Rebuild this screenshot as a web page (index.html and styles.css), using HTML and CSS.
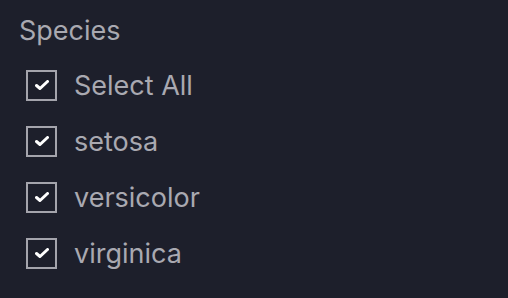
FILE: index.html
```
<!DOCTYPE html>
<html lang="en">
<head>
  <meta charset="UTF-8" />
  <meta name="viewport" content="width=device-width, initial-scale=1.0" />
  <title>Species</title>
  <link rel="stylesheet" href="styles.css">
</head>
<body>
  <div id="panel">
    <div class="title">Species</div>
    <div class="options">
      <label class="option"><span class="box"><svg viewBox="0 0 14 10"><path d="M1.5 5.5 L5 8.5 L12.5 1.5" /></svg></span>Select All</label>
      <label class="option"><span class="box"><svg viewBox="0 0 14 10"><path d="M1.5 5.5 L5 8.5 L12.5 1.5" /></svg></span>setosa</label>
      <label class="option"><span class="box"><svg viewBox="0 0 14 10"><path d="M1.5 5.5 L5 8.5 L12.5 1.5" /></svg></span>versicolor</label>
      <label class="option"><span class="box"><svg viewBox="0 0 14 10"><path d="M1.5 5.5 L5 8.5 L12.5 1.5" /></svg></span>virginica</label>
    </div>
  </div>
</body>
</html>
```

FILE: styles.css
```
body {
  margin: 0;
  background-color: #1d1f2b;
  font-family: Inter, "Noto Sans", sans-serif;
  color: #a9a9b1;
  height: 100vh;
  overflow: hidden;
}

#panel {
  padding: 14px 19px;
}

.title {
  font-size: 27px;
  line-height: 34px;
}

.options {
  display: flex;
  flex-direction: column;
  margin-top: 9px;
  padding-left: 7px;
}

.option {
  display: flex;
  align-items: center;
  gap: 17px;
  height: 56px;
  font-size: 27px;
}

.box {
  width: 31px;
  height: 31px;
  box-sizing: border-box;
  border: 2px solid #a4a4ac;
  display: flex;
  align-items: center;
  justify-content: center;
}

.box svg {
  width: 14px;
  height: 10px;
  fill: none;
  stroke: #fff;
  stroke-width: 3;
  stroke-linecap: round;
  stroke-linejoin: round;
}
```
